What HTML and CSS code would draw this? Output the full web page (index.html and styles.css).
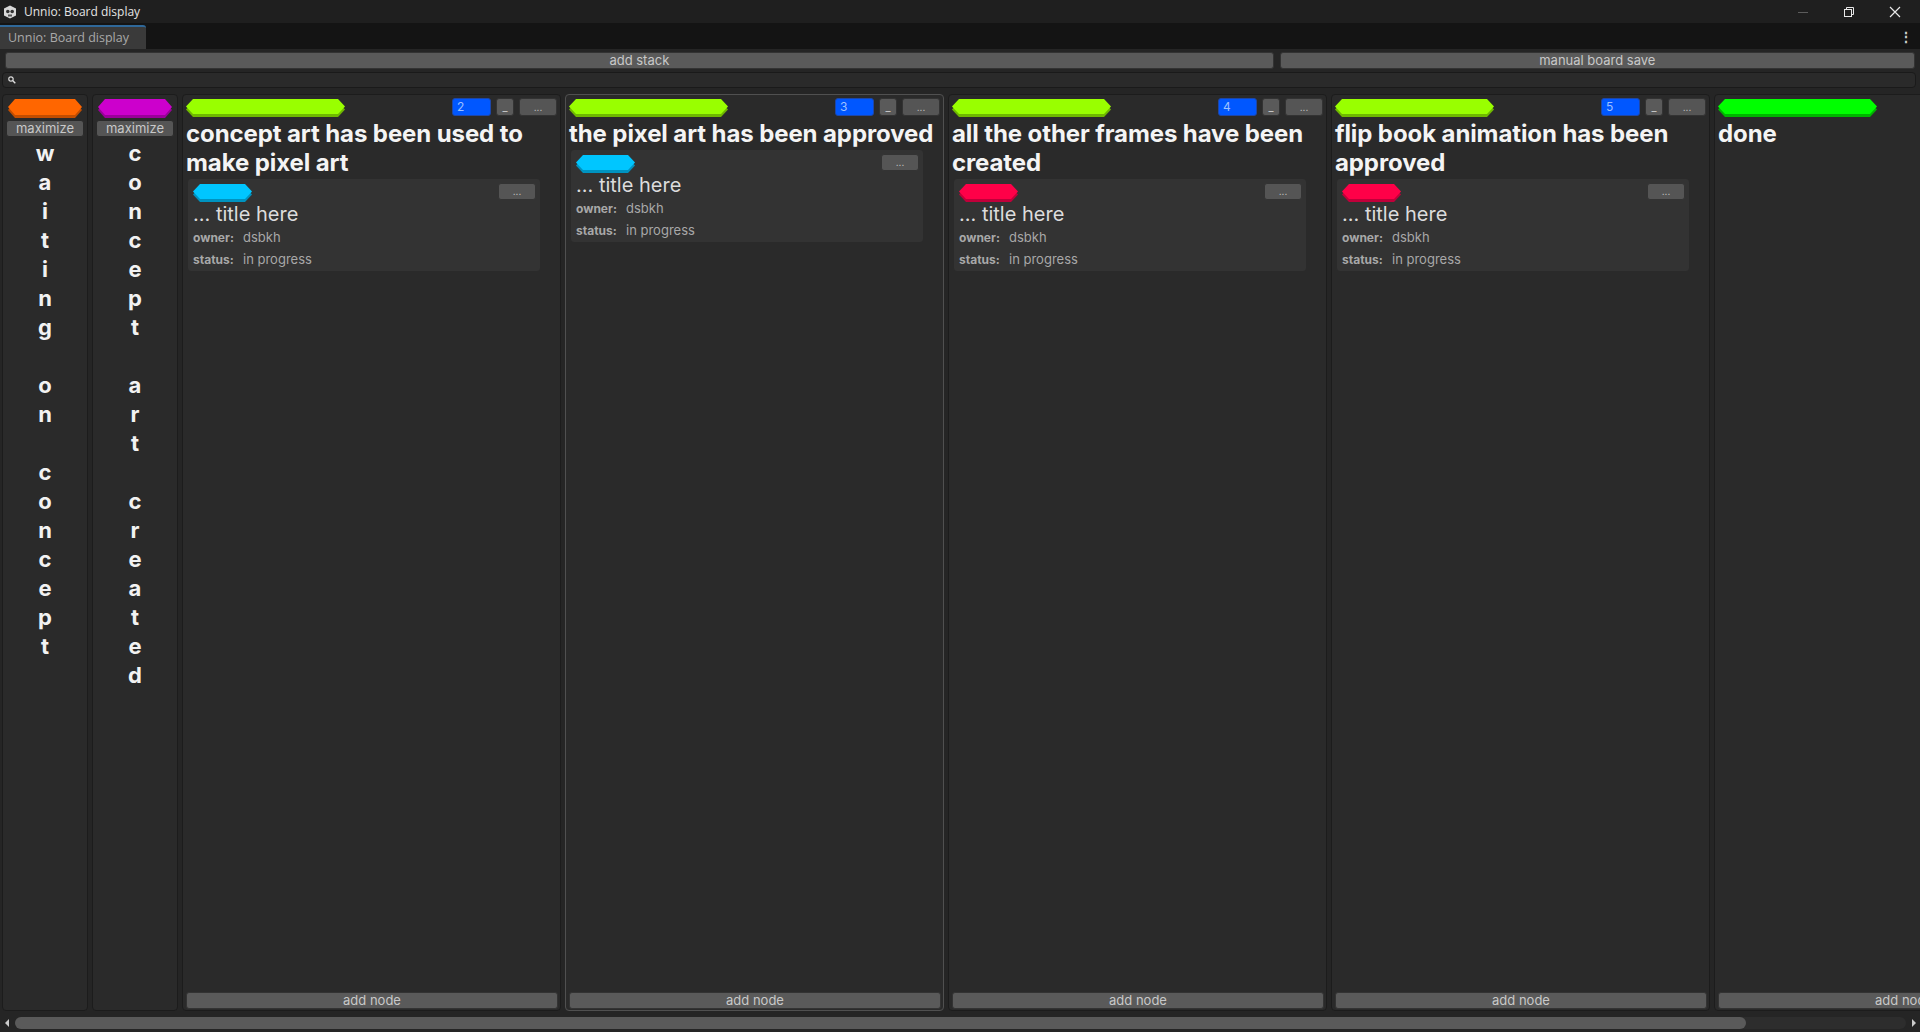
FILE: index.html
```html
<!DOCTYPE html>
<html lang="en">
<head>
  <meta charset="UTF-8">
  <meta name="viewport" content="width=device-width, initial-scale=1.0">
  <title>Unnio: Board display</title>
  <link rel="stylesheet" href="styles.css">
</head>
<body>
  <div class="titlebar">
    <svg class="app-icon" width="14" height="14" viewBox="0 0 14 14">
      <polygon points="7,0.5 13,3.5 13,10.5 7,13.5 1,10.5 1,3.5" fill="#d8d8d8"/>
      <circle cx="4.8" cy="6.5" r="1.8" fill="#333"/>
      <circle cx="9.2" cy="6.5" r="1.8" fill="#333"/>
      <rect x="5" y="9.5" width="4" height="2" fill="#555"/>
    </svg>
    <span class="win-title">Unnio: Board display</span>
    <div class="win-controls">
      <svg width="12" height="12" viewBox="0 0 12 12"><line x1="1" y1="6.5" x2="11" y2="6.5" stroke="#5c5c5c" stroke-width="1"/></svg>
      <svg width="12" height="12" viewBox="0 0 12 12"><rect x="1.5" y="3.5" width="7" height="7" fill="none" stroke="#e8e8e8"/><path d="M3.5 3.5V1.5h7v7h-2" fill="none" stroke="#e8e8e8"/></svg>
      <svg width="12" height="12" viewBox="0 0 12 12"><path d="M1 1L11 11M11 1L1 11" stroke="#e8e8e8" stroke-width="1.2"/></svg>
    </div>
  </div>

  <div class="tabbar">
    <div class="tab">Unnio: Board display</div>
    <span class="kebab">&#8942;</span>
  </div>

  <div class="toolbar">
    <button class="btn grow2">add stack</button>
    <button class="btn grow1">manual board save</button>
  </div>

  <div class="search">
    <svg width="8" height="8" viewBox="0 0 8 8"><circle cx="3" cy="3" r="2.2" fill="none" stroke="#ddd" stroke-width="1.2"/><line x1="4.6" y1="4.6" x2="7.3" y2="7.3" stroke="#ddd" stroke-width="1.4"/></svg>
  </div>

  <div class="board">
    <div class="stack collapsed">
      <div class="tag orange"></div>
      <button class="btn maximize">maximize</button>
      <div class="vtext">w<br>a<br>i<br>t<br>i<br>n<br>g<br><br>o<br>n<br><br>c<br>o<br>n<br>c<br>e<br>p<br>t</div>
    </div>

    <div class="stack collapsed">
      <div class="tag magenta"></div>
      <button class="btn maximize">maximize</button>
      <div class="vtext">c<br>o<br>n<br>c<br>e<br>p<br>t<br><br>a<br>r<br>t<br><br>c<br>r<br>e<br>a<br>t<br>e<br>d</div>
    </div>

    <div class="stack">
      <div class="stack-head">
        <div class="tag lime"></div>
        <div class="num">2</div>
        <button class="btn sm">_</button>
        <button class="btn dots">...</button>
      </div>
      <h2 class="stack-title">concept art has been used to make pixel art</h2>
      <div class="card">
        <div class="card-head">
          <div class="tag small cyan"></div>
          <button class="btn dots">...</button>
        </div>
        <div class="card-title">... title here</div>
        <div class="field"><b>owner:</b><span>dsbkh</span></div>
        <div class="field"><b>status:</b><span>in progress</span></div>
      </div>
      <button class="btn add-node">add node</button>
    </div>

    <div class="stack selected">
      <div class="stack-head">
        <div class="tag lime"></div>
        <div class="num">3</div>
        <button class="btn sm">_</button>
        <button class="btn dots">...</button>
      </div>
      <h2 class="stack-title">the pixel art has been approved</h2>
      <div class="card">
        <div class="card-head">
          <div class="tag small cyan"></div>
          <button class="btn dots">...</button>
        </div>
        <div class="card-title">... title here</div>
        <div class="field"><b>owner:</b><span>dsbkh</span></div>
        <div class="field"><b>status:</b><span>in progress</span></div>
      </div>
      <button class="btn add-node">add node</button>
    </div>

    <div class="stack">
      <div class="stack-head">
        <div class="tag lime"></div>
        <div class="num">4</div>
        <button class="btn sm">_</button>
        <button class="btn dots">...</button>
      </div>
      <h2 class="stack-title">all the other frames have been created</h2>
      <div class="card">
        <div class="card-head">
          <div class="tag small red"></div>
          <button class="btn dots">...</button>
        </div>
        <div class="card-title">... title here</div>
        <div class="field"><b>owner:</b><span>dsbkh</span></div>
        <div class="field"><b>status:</b><span>in progress</span></div>
      </div>
      <button class="btn add-node">add node</button>
    </div>

    <div class="stack">
      <div class="stack-head">
        <div class="tag lime"></div>
        <div class="num">5</div>
        <button class="btn sm">_</button>
        <button class="btn dots">...</button>
      </div>
      <h2 class="stack-title">flip book animation has been approved</h2>
      <div class="card">
        <div class="card-head">
          <div class="tag small red"></div>
          <button class="btn dots">...</button>
        </div>
        <div class="card-title">... title here</div>
        <div class="field"><b>owner:</b><span>dsbkh</span></div>
        <div class="field"><b>status:</b><span>in progress</span></div>
      </div>
      <button class="btn add-node">add node</button>
    </div>

    <div class="stack">
      <div class="stack-head">
        <div class="tag green"></div>
      </div>
      <h2 class="stack-title">done</h2>
      <button class="btn add-node">add node</button>
    </div>
  </div>

  <div class="hscroll">
    <span class="arrow left"></span>
    <div class="track"><div class="thumb"></div></div>
    <span class="arrow right"></span>
  </div>
</body>
</html>
```

FILE: styles.css
```css
* {
  box-sizing: border-box;
}
body {
  margin: 0;
  height: 1032px;
  overflow: hidden;
  background: #252525;
  color: #ddd;
  font-family: Inter, 'Noto Sans', sans-serif;
}
.titlebar {
  height: 23px;
  background: #1f1f1f;
  display: flex;
  align-items: center;
  padding-left: 3px;
}
.app-icon {
  margin-right: 7px;
}
.win-title {
  font-family: 'Open Sans', 'Noto Sans', sans-serif;
  font-size: 12px;
  color: #e4e4e4;
}
.win-controls {
  margin-left: auto;
  display: flex;
  gap: 34px;
  padding-right: 19px;
}
.tabbar {
  height: 26px;
  background: #141414;
  display: flex;
  align-items: flex-end;
}
.tab {
  width: 146px;
  height: 24px;
  background: #3a3a3a;
  border-top: 2px solid #2f6899;
  border-top-right-radius: 3px;
  color: #a9a9a9;
  font-family: 'Open Sans', 'Noto Sans', sans-serif;
  font-size: 12.5px;
  padding: 2px 0 0 8px;
}
.kebab {
  margin-left: auto;
  margin-right: 7px;
  align-self: center;
  color: #ccc;
  font-size: 14px;
  font-weight: bold;
}
.btn {
  background: #5a5a5a;
  border: 1px solid #333;
  border-radius: 3px;
  color: #c8c8c8;
  font-family: Inter, 'Noto Sans', sans-serif;
  font-size: 13px;
  padding: 0;
  line-height: 15px;
  cursor: pointer;
}
.toolbar {
  display: flex;
  gap: 6px;
  padding: 3px 5px 0 5px;
}
.toolbar .btn {
  height: 17px;
}
.grow2 {
  flex: 2;
}
.grow1 {
  flex: 1;
}
.search {
  margin: 3px 4px 0 2px;
  height: 16px;
  background: #2a2a2a;
  border: 1px solid #1a1a1a;
  border-radius: 4px;
  display: flex;
  align-items: center;
  padding-left: 5px;
}
.board {
  display: flex;
  gap: 4px;
  height: 917px;
  margin-top: 6px;
  padding-left: 2px;
  overflow: hidden;
}
.stack {
  flex: 0 0 379px;
  background: #2a2a2a;
  border: 1px solid #1c1c1c;
  border-radius: 4px;
  display: flex;
  flex-direction: column;
  padding: 3px 2px 1px 3px;
}
.stack.selected {
  border-color: #505050;
}
.stack.collapsed {
  flex-basis: 85px;
  align-items: center;
  padding: 2px 3px;
}
.tag {
  height: 15px;
  width: 159px;
  flex: none;
  margin-top: 1px;
}
.tag::before {
  content: '';
  display: block;
  height: 100%;
  clip-path: polygon(7px 0, calc(100% - 7px) 0, 100% 50%, calc(100% - 7px) 100%, 7px 100%, 0 50%);
}
.collapsed .tag {
  width: 74px;
  height: 16px;
  margin-top: 2px;
}
.tag.small {
  width: 59px;
  height: 15px;
}
.orange { filter: drop-shadow(0 3px 0 #c24d00); }
.orange::before { background: #ff6600; }
.magenta { filter: drop-shadow(0 3px 0 #9a009a); }
.magenta::before { background: #cc00cc; }
.lime { filter: drop-shadow(0 3px 0 #6fb800); }
.lime::before { background: #99ff00; }
.cyan { filter: drop-shadow(0 3px 0 #0093c0); }
.cyan::before { background: #00c6ff; }
.red { filter: drop-shadow(0 3px 0 #c0003a); }
.red::before { background: #ff0048; }
.green { filter: drop-shadow(0 3px 0 #00b400); }
.green::before { background: #00ff00; }
.maximize {
  width: 78px;
  height: 17px;
  margin-top: 5px;
  background: #555;
  border-color: #2a2a2a;
}
.vtext {
  margin-top: 2px;
  font-size: 22px;
  font-weight: bold;
  line-height: 29px;
  color: #f2f2f2;
  text-align: center;
}
.stack-head {
  display: flex;
  align-items: flex-start;
  height: 19px;
  gap: 5px;
  padding-right: 1px;
}
.num {
  margin-left: auto;
  width: 39px;
  height: 18px;
  background: #0057ff;
  border: 1px solid #1d46a8;
  border-radius: 3px;
  color: #9cc0ff;
  font-size: 12px;
  line-height: 16px;
  padding-left: 4px;
}
.btn.sm {
  width: 18px;
  height: 18px;
  font-size: 11px;
}
.btn.dots {
  width: 38px;
  height: 18px;
  font-size: 10px;
  background: #555;
}
.stack-title {
  margin: 2px 0 1px 0;
  font-size: 24px;
  font-weight: bold;
  letter-spacing: -0.1px;
  line-height: 29px;
  color: #f4f4f4;
}
.card {
  margin: 0 17px 0 1px;
  background: #333;
  border: 1px solid #2a2a2a;
  border-radius: 4px;
  padding: 4px 4px 1px 5px;
}
.card-head {
  display: flex;
  justify-content: space-between;
  align-items: flex-start;
  height: 18px;
}
.card .btn.dots {
  height: 17px;
}
.card-title {
  font-size: 20px;
  line-height: 26px;
  color: #dcdcdc;
}
.field {
  display: flex;
  align-items: baseline;
  line-height: 20.5px;
  color: #a8a8a8;
}
.field b {
  width: 50px;
  font-size: 12px;
}
.field span {
  font-size: 13px;
}
.add-node {
  margin-top: auto;
  height: 17px;
  flex: none;
}
.hscroll {
  height: 21px;
  display: flex;
  align-items: center;
  padding: 3px 4px 0 5px;
}
.track {
  flex: 1;
  height: 12px;
  background: #2d2d2d;
  border-radius: 6px;
  margin: 0 6px;
}
.thumb {
  width: 1731px;
  height: 100%;
  background: #5a5a5a;
  border-radius: 6px;
}
.arrow {
  width: 0;
  height: 0;
  border-top: 4px solid transparent;
  border-bottom: 4px solid transparent;
}
.arrow.left {
  border-right: 4px solid #ccc;
}
.arrow.right {
  border-left: 4px solid #ccc;
}
```
